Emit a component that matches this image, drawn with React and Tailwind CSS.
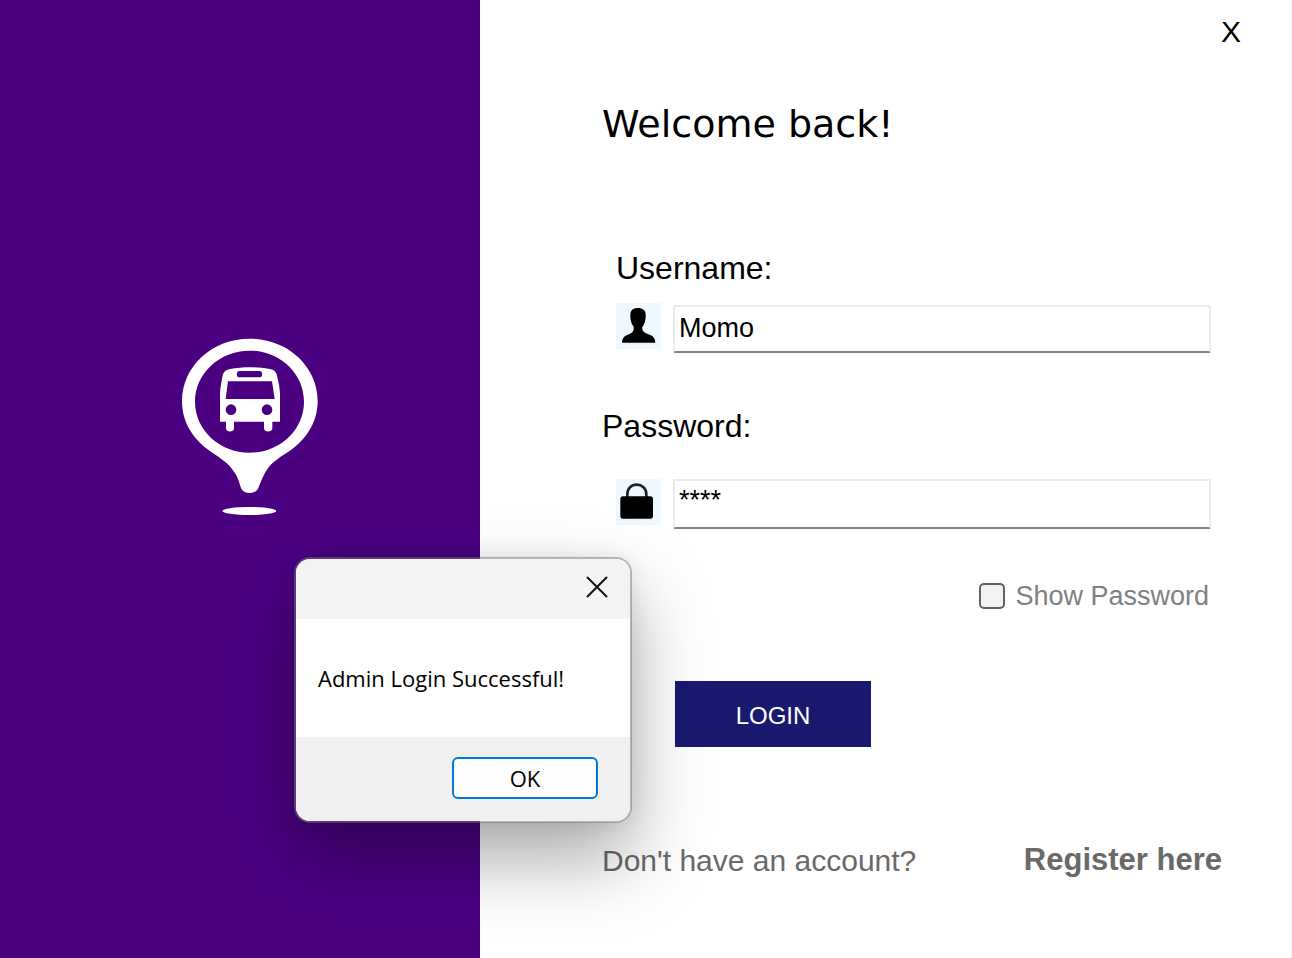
import React, { useState } from "react";

function BusPin() {
  return (
    <svg viewBox="0 0 540 630" className="h-[210px] w-[180px]" aria-hidden="true">
      <path
        fill="#fff"
        fillRule="evenodd"
        d="M269 56C382 56 473 139 473 243C473 312 433 364 384 396C352 416 330 432 317 455C306 474 301 489 295 504C291 514 281 519 269 519C257 519 247 514 243 504C238 489 234 470 222 455C208 432 184 416 154 396C104 362 66 312 66 243C66 139 156 56 269 56ZM269 92C179 92 105 160 105 245C105 330 179 398 269 398C359 398 432 330 432 245C432 160 359 92 269 92Z"
      />
      <path
        fill="#fff"
        fillRule="evenodd"
        d="M180 305V225C180 205 184 190 187 172C188 158 196 150 210 147C250 140 290 140 330 147C344 150 351 158 352 172C356 190 360 205 360 225V305H337V325C337 338 312 338 312 325V305H222V325C222 338 198 338 198 325V305ZM238 153C228 153 228 172 238 172H299C309 172 309 153 299 153ZM204 184L197 237H344L336 184ZM213 253A16 16 0 1 0 213 285A16 16 0 1 0 213 253ZM321 253A16 16 0 1 0 321 285A16 16 0 1 0 321 253Z"
      />
      <ellipse cx="268" cy="573" rx="81" ry="12" fill="#fff" />
    </svg>
  );
}

function PersonIcon() {
  return (
    <svg viewBox="0 0 135 138" className="h-[46px] w-[45px] shrink-0 bg-[#f0f8ff]" aria-hidden="true">
      <path d="M65 15C80 15 90 21 89 38C89 52 86 62 79 72V80C82 88 91 91 103 96C113 100 118 108 118 119H18C18 108 23 100 33 96C45 91 51 88 53 80V72C46 62 43 52 43 38C43 21 51 15 65 15Z" />
    </svg>
  );
}

function LockIcon() {
  return (
    <svg viewBox="0 0 135 138" className="h-[46px] w-[45px] shrink-0 bg-[#f0f8ff]" aria-hidden="true">
      <path d="M34 60V46C34 28 46 17 62 17C78 17 91 28 91 46V60" fill="none" stroke="#222" strokeWidth="8" />
      <rect x="13" y="52" width="98" height="67" rx="8" />
    </svg>
  );
}

const fieldClass =
  "min-w-0 flex-1 rounded-[2px] border-2 border-[#ebebeb] border-b-[#828282] bg-white px-1 text-[27px] leading-8 text-black outline-none";

export default function App() {
  const [username, setUsername] = useState("Momo");
  const [password, setPassword] = useState("****");
  const [show, setShow] = useState(false);
  const [open, setOpen] = useState(true);

  return (
    <div className="relative flex min-h-screen bg-white font-['Liberation_Sans',Arial,sans-serif] text-black">
      <aside className="flex w-[480px] shrink-0 items-center justify-center bg-[#4b0082] pb-[108px] pl-5">
        <BusPin />
      </aside>

      <main className="flex min-w-0 flex-1 flex-col border-r border-[#f0f0f0]">
        <div className="flex justify-end pt-3 pr-[50px]">
          <button type="button" aria-label="Close window" className="text-[30px] leading-10">
            X
          </button>
        </div>

        <form className="flex flex-col pr-[69px] pl-[122px]" onSubmit={(e) => e.preventDefault()}>
          <h1 className="mt-12 font-['DejaVu_Sans',sans-serif] text-[38px] leading-[48px]">Welcome back!</h1>

          <label htmlFor="username" className="mt-[100px] pl-[14px] text-[32px] leading-10">
            Username:
          </label>
          <div className="mt-[15px] flex items-start gap-3 pr-[11px] pl-[14px]">
            <PersonIcon />
            <input
              id="username"
              type="text"
              value={username}
              onChange={(e) => setUsername(e.target.value)}
              className={`${fieldClass} mt-0.5 h-12 pb-0.5`}
            />
          </div>

          <label htmlFor="password" className="mt-[53px] text-[32px] leading-10">
            Password:
          </label>
          <div className="mt-[33px] flex items-start gap-3 pr-[11px] pl-[14px]">
            <LockIcon />
            <input
              id="password"
              type="text"
              value={password}
              onChange={(e) => setPassword(e.target.value)}
              className={`${fieldClass} h-[50px] pb-2`}
            />
          </div>

          <div className="mt-[51px] flex items-center justify-end gap-2.5 pr-[13px]">
            <input
              id="show"
              type="checkbox"
              checked={show}
              onChange={(e) => setShow(e.target.checked)}
              className="size-[26px] appearance-none rounded-[5px] border-2 border-[#626262] bg-[#f3f3f3] checked:bg-[#626262]"
            />
            <label htmlFor="show" className="text-[27px] leading-8 text-[#808080]">
              Show Password
            </label>
          </div>

          <button
            type="submit"
            className="mt-[69px] ml-[73px] h-[66px] w-[196px] bg-[#191970] pt-1 text-[24px] text-white"
          >
            LOGIN
          </button>

          <div className="mt-[94px] flex items-start justify-between whitespace-nowrap text-[#696969]">
            <p className="text-[30px] leading-10">Don't have an account?</p>
            <a href="#register" className="text-[31px] leading-[38px] font-bold">
              Register here
            </a>
          </div>
        </form>
      </main>

      {open && (
        <div
          role="dialog"
          aria-label="Login message"
          className="absolute top-[557px] left-[294px] w-[338px] overflow-hidden rounded-2xl border-2 border-[#757575]/50 bg-white bg-clip-padding font-['Open_Sans',sans-serif] text-[22px] leading-8 shadow-[0_36px_76px_rgba(0,0,0,0.34),0_0_20px_rgba(0,0,0,0.08)]"
        >
          <div className="flex h-[60px] items-center justify-end bg-[#f3f3f5] pr-[22px] pb-1">
            <button type="button" aria-label="Close" onClick={() => setOpen(false)}>
              <svg viewBox="0 0 22 22" className="size-[22px]" fill="none" stroke="#111" strokeWidth="2">
                <path d="M1 1L21 21M21 1L1 21" />
              </svg>
            </button>
          </div>
          <p className="flex h-[118px] items-center px-[22px]">Admin Login Successful!</p>
          <div className="flex h-[84px] items-center justify-end bg-[#f0f0f0] pr-8 pb-0.5">
            <button
              type="button"
              onClick={() => setOpen(false)}
              className="h-[42px] w-[146px] rounded-md border-2 border-[#0078d4] bg-[#fdfdfd]"
            >
              OK
            </button>
          </div>
        </div>
      )}
    </div>
  );
}
